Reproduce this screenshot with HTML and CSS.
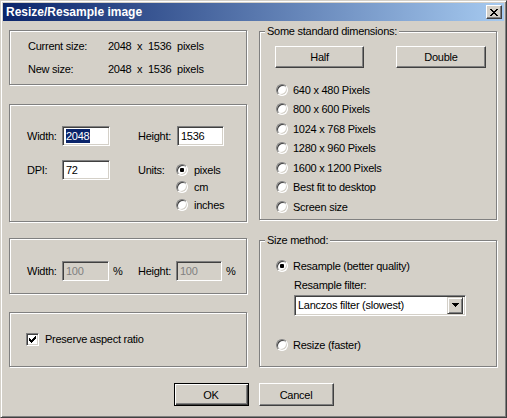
FILE: index.html
```html
<!DOCTYPE html>
<html lang="en">
<head>
    <meta charset="UTF-8">
    <title>Resize/Resample image</title>
    <link rel="stylesheet" href="styles.css">
</head>
<body>
    <div class="window">
        <div class="titlebar">
            <span class="title">Resize/Resample image</span>
            <span class="close">
                <svg width="8" height="7" viewBox="0 0 8 7" shape-rendering="crispEdges">
                    <path d="M0 0h2v1H0z M6 0h2v1H6z M1 1h2v1H1z M5 1h2v1H5z M2 2h4v1H2z M3 3h2v1H3z M2 4h4v1H2z M1 5h2v1H1z M5 5h2v1H5z M0 6h2v1H0z M6 6h2v1H6z"/>
                </svg>
            </span>
        </div>

        <div class="client">
            <div class="columns">
                <div class="col-left">
                    <div class="group group-info">
                        <div class="info-grid">
                            <span>Current size:</span>
                            <span>2048&nbsp;&nbsp;x&nbsp;&nbsp;1536&nbsp;&nbsp;pixels</span>
                            <span>New size:</span>
                            <span>2048&nbsp;&nbsp;x&nbsp;&nbsp;1536&nbsp;&nbsp;pixels</span>
                        </div>
                    </div>

                    <div class="group group-dims">
                        <div class="form-grid dims-grid">
                            <span class="lbl">Width:</span>
                            <div class="edit w48"><span class="sel">2048</span></div>
                            <span class="lbl">Height:</span>
                            <div class="edit w47 shift">1536</div>

                            <span class="lbl">DPI:</span>
                            <div class="edit w48">72</div>
                            <span class="lbl">Units:</span>
                            <div class="units">
                                <div class="opt"><span class="radio on"></span>pixels</div>
                                <div class="opt"><span class="radio"></span>cm</div>
                                <div class="opt"><span class="radio"></span>inches</div>
                            </div>
                        </div>
                    </div>

                    <div class="group group-pct">
                        <div class="form-grid">
                            <span class="lbl">Width:</span>
                            <div class="pct"><div class="edit w47 disabled">100</div>%</div>
                            <span class="lbl">Height:</span>
                            <div class="pct"><div class="edit w46 disabled">100</div>%</div>
                        </div>
                    </div>

                    <div class="group group-aspect">
                        <span class="check">
                            <svg width="7" height="7" viewBox="0 0 7 7" shape-rendering="crispEdges">
                                <path d="M0 2h1v3H0z M1 3h1v3H1z M2 4h1v3H2z M3 3h1v3H3z M4 2h1v3H4z M5 1h1v3H5z M6 0h1v3H6z"/>
                            </svg>
                        </span>
                        Preserve aspect ratio
                    </div>
                </div>

                <div class="col-right">
                    <div class="group group-std">
                        <span class="caption">Some standard dimensions:</span>
                        <div class="std-buttons">
                            <button class="btn half">Half</button>
                            <button class="btn double">Double</button>
                        </div>
                        <div class="radio-list">
                            <div class="opt"><span class="radio"></span>640 x 480 Pixels</div>
                            <div class="opt"><span class="radio"></span>800 x 600 Pixels</div>
                            <div class="opt"><span class="radio"></span>1024 x 768 Pixels</div>
                            <div class="opt"><span class="radio"></span>1280 x 960 Pixels</div>
                            <div class="opt"><span class="radio"></span>1600 x 1200 Pixels</div>
                            <div class="opt"><span class="radio"></span>Best fit to desktop</div>
                            <div class="opt"><span class="radio"></span>Screen size</div>
                        </div>
                    </div>

                    <div class="group group-method">
                        <span class="caption">Size method:</span>
                        <div class="opt first"><span class="radio on"></span>Resample (better quality)</div>
                        <div class="filter-label">Resample filter:</div>
                        <div class="combo">
                            <span class="combo-text">Lanczos filter (slowest)</span>
                            <span class="combo-btn">
                                <svg width="7" height="4" viewBox="0 0 7 4" shape-rendering="crispEdges">
                                    <path d="M0 0h7v1H0z M1 1h5v1H1z M2 2h3v1H2z M3 3h1v1H3z"/>
                                </svg>
                            </span>
                        </div>
                        <div class="opt last"><span class="radio"></span>Resize (faster)</div>
                    </div>
                </div>
            </div>

            <div class="actions">
                <button class="btn btn-default">OK</button>
                <button class="btn">Cancel</button>
            </div>
        </div>
    </div>
</body>
</html>
```

FILE: styles.css
```css
* {
    box-sizing: border-box;
}
body {
    margin: 0;
    font-family: "Liberation Sans", Arial, sans-serif;
    font-size: 11px;
    letter-spacing: -0.25px;
    color: #000;
    background: #d4d0c8;
}
.window {
    width: 507px;
    height: 418px;
    padding: 2px;
    background: #d4d0c8;
    border: 1px solid;
    border-color: #d4d0c8 #404040 #404040 #d4d0c8;
    box-shadow: inset 1px 1px #fff, inset -1px -1px #808080;
}
.titlebar {
    height: 18px;
    display: flex;
    align-items: center;
    justify-content: space-between;
    padding: 0 2px 0 3px;
    background: linear-gradient(to right, #0a246a, #a6caf0);
}
.title {
    color: #fff;
    font-weight: bold;
    font-size: 12px;
    letter-spacing: 0;
}
.close {
    width: 16px;
    height: 14px;
    display: flex;
    align-items: center;
    justify-content: center;
    background: #d4d0c8;
    border: 1px solid;
    border-color: #fff #404040 #404040 #fff;
    box-shadow: inset -1px -1px #808080;
}
.client {
    padding: 0 6px;
}
.columns {
    display: grid;
    grid-template-columns: 238px 238px;
    column-gap: 12px;
    align-items: start;
}
.col-left {
    margin-top: 9px;
    display: flex;
    flex-direction: column;
}
.col-right {
    margin-top: 10px;
    display: flex;
    flex-direction: column;
}
.group {
    border: 1px solid #808080;
    box-shadow: inset 1px 1px #fff, 1px 1px #fff;
}
.caption {
    display: block;
    width: max-content;
    margin: -7px 0 0 5px;
    padding: 0 2px;
    line-height: 13px;
    background: #d4d0c8;
}

/* left column */
.group-info {
    height: 55px;
    padding: 9px 0 0 18px;
}
.info-grid {
    display: grid;
    grid-template-columns: 80px auto;
    row-gap: 10px;
    line-height: 13px;
}
.group-dims {
    height: 118px;
    margin-top: 19px;
    padding: 21px 0 0 17px;
}
.group-pct {
    height: 56px;
    margin-top: 16px;
    padding: 22px 0 0 17px;
}
.group-aspect {
    height: 55px;
    margin-top: 18px;
    padding: 20px 0 0 16px;
    display: flex;
    align-items: flex-start;
    gap: 6px;
    line-height: 13px;
}
.form-grid {
    display: grid;
    grid-template-columns: 35px 76px 38px auto;
    align-items: start;
}
.dims-grid {
    row-gap: 14px;
}
.lbl {
    line-height: 20px;
}
.edit {
    height: 20px;
    display: flex;
    align-items: center;
    padding: 0 1px 0 3px;
    line-height: 14px;
    background: #fff;
    border: 1px solid;
    border-color: #808080 #fff #fff #808080;
    box-shadow: inset 1px 1px #404040, inset -1px -1px #d4d0c8;
}
.w48 { width: 48px; }
.w47 { width: 47px; }
.w46 { width: 46px; }
.shift {
    margin-left: 1px;
}
.edit.disabled {
    background: #d4d0c8;
    color: #808080;
}
.sel {
    background: #0a246a;
    color: #fff;
    padding-right: 1px;
}
.pct {
    display: flex;
    align-items: center;
    gap: 4px;
    height: 20px;
}
.units {
    margin-top: 1px;
}
.units .opt {
    height: 17.5px;
    gap: 6px;
}

/* radios and checkbox */
.opt {
    display: flex;
    align-items: center;
    gap: 5px;
    height: 19.5px;
}
.radio {
    flex: none;
    width: 12px;
    height: 12px;
    display: flex;
    align-items: center;
    justify-content: center;
    border-radius: 50%;
    background: #fff;
    border: 1px solid;
    border-color: #808080 #fff #fff #808080;
    box-shadow: inset 1px 1px #404040, inset -1px -1px #d4d0c8;
}
.radio.on::after {
    content: "";
    width: 4px;
    height: 4px;
    border-radius: 1px;
    background: #000;
}
.check {
    flex: none;
    width: 13px;
    height: 13px;
    display: flex;
    align-items: center;
    justify-content: center;
    background: #fff;
    border: 1px solid;
    border-color: #808080 #fff #fff #808080;
    box-shadow: inset 1px 1px #404040, inset -1px -1px #d4d0c8;
}

/* right column */
.group-std {
    height: 189px;
    padding-left: 15px;
}
.group-std .caption {
    margin-left: -10px;
}
.std-buttons {
    display: flex;
    gap: 32px;
    margin-top: 8px;
}
.half {
    width: 89px;
    height: 22px;
}
.double {
    width: 90px;
    height: 22px;
}
.radio-list {
    margin-top: 12px;
    padding-left: 1px;
}
.group-method {
    height: 127px;
    margin-top: 20px;
    padding-left: 16px;
}
.group-method .caption {
    margin-left: -11px;
}
.group-method .opt.first {
    margin-top: 9px;
}
.filter-label {
    margin: 3px 0 0 18px;
    line-height: 13px;
}
.combo {
    width: 172px;
    height: 21px;
    margin: 3px 0 0 18px;
    display: flex;
    align-items: center;
    padding: 2px;
    background: #fff;
    border: 1px solid;
    border-color: #808080 #fff #fff #808080;
    box-shadow: inset 1px 1px #404040, inset -1px -1px #d4d0c8;
}
.combo-text {
    flex: 1;
    padding-left: 1px;
}
.combo-btn {
    width: 16px;
    height: 17px;
    display: flex;
    align-items: center;
    justify-content: center;
    background: #d4d0c8;
    border: 1px solid;
    border-color: #d4d0c8 #404040 #404040 #d4d0c8;
    box-shadow: inset 1px 1px #fff, inset -1px -1px #808080;
}
.group-method .opt.last {
    margin-top: 20px;
}

/* buttons */
.btn {
    font: inherit;
    letter-spacing: inherit;
    color: #000;
    padding: 0;
    background: #d4d0c8;
    border: 1px solid;
    border-color: #fff #404040 #404040 #fff;
    box-shadow: inset -1px -1px #808080;
}
.actions {
    display: flex;
    justify-content: center;
    gap: 10px;
    margin-top: 16px;
}
.actions .btn {
    width: 75px;
    height: 23px;
}
.btn-default {
    border-color: #000;
    box-shadow: inset 1px 1px #fff, inset -1px -1px #404040, inset -2px -2px #808080;
}
```
